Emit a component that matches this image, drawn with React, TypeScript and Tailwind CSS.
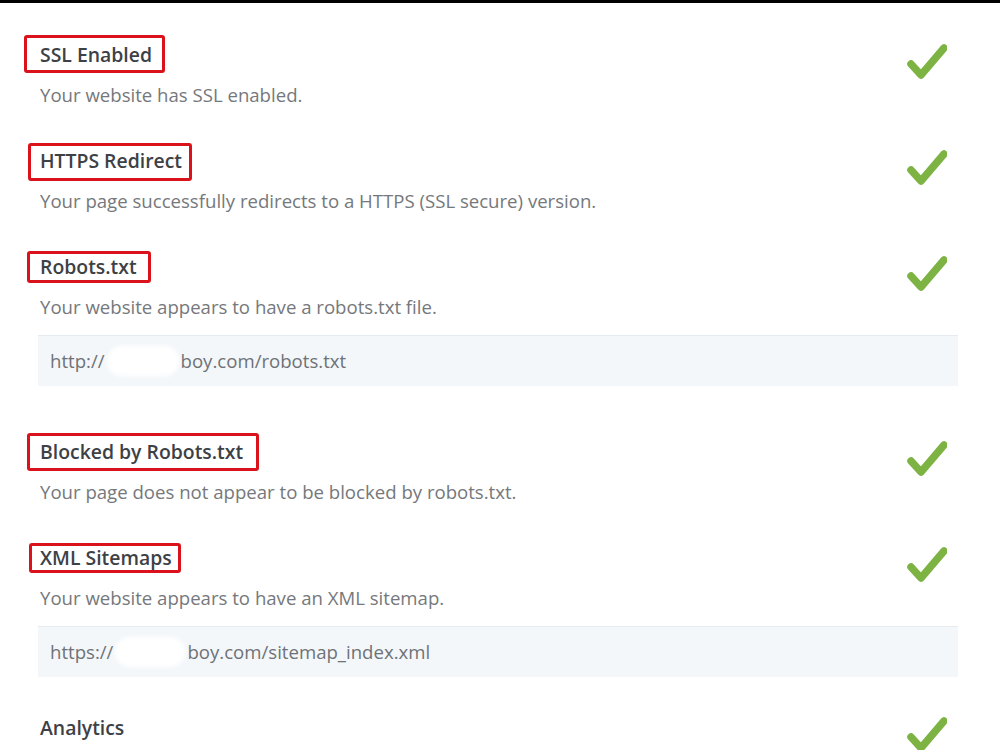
const sections = [
  {
    title: "SSL Enabled",
    desc: "Your website has SSL enabled.",
    box: "-left-[16px] -top-[6px] w-[141px] h-[38px]",
    gap: "mt-[38px]",
  },
  {
    title: "HTTPS Redirect",
    desc: "Your page successfully redirects to a HTTPS (SSL secure) version.",
    box: "-left-[12px] -top-[4px] w-[164px] h-[38px]",
    gap: "mt-[40px]",
  },
  {
    title: "Robots.txt",
    desc: "Your website appears to have a robots.txt file.",
    box: "-left-[13px] -top-[2px] w-[124px] h-[32px]",
    gap: "mt-[40px]",
    url: { pre: "http://", post: "boy.com/robots.txt", blob: "w-[72px]" },
  },
  {
    title: "Blocked by Robots.txt",
    desc: "Your page does not appear to be blocked by robots.txt.",
    box: "-left-[13px] -top-[5px] w-[232px] h-[38px]",
    gap: "mt-[52px]",
  },
  {
    title: "XML Sitemaps",
    desc: "Your website appears to have an XML sitemap.",
    box: "-left-[11px] -top-[1px] w-[152px] h-[30px]",
    gap: "mt-[40px]",
    url: { pre: "https://", post: "boy.com/sitemap_index.xml", blob: "w-[70px]" },
  },
  {
    title: "Analytics",
    desc: "",
    box: "",
    gap: "mt-[37px]",
  },
];

function Check() {
  return (
    <svg width="40" height="40" viewBox="0 0 40 40" className="mt-[1px] mr-[11px] shrink-0">
      <polyline
        points="4,22 14,33 37,6"
        fill="none"
        stroke="#7db343"
        strokeWidth={7.5}
        strokeLinecap="round"
        strokeLinejoin="round"
      />
    </svg>
  );
}

export default function App() {
  return (
    <div
      className="h-[750px] w-[1000px] overflow-hidden border-t-[3px] border-black bg-white pl-[38px] pr-[42px]"
      style={{ fontFamily: '"Open Sans", "Noto Sans", sans-serif' }}
    >
      {sections.map((s) => (
        <section key={s.title} className={s.gap}>
          <div className="flex items-start justify-between">
            <div className="pl-[2px]">
              <div className="relative inline-block h-[28px] text-[19.4px] leading-[28px] font-semibold text-[#3d4146]">
                {s.title}
                {s.box && (
                  <span className={`absolute rounded-[3px] border-[3px] border-[#d9121b] ${s.box}`} />
                )}
              </div>
              {s.desc && (
                <p className="mt-[14px] text-[18.6px] leading-[24px] text-[#75787c]">{s.desc}</p>
              )}
            </div>
            <Check />
          </div>
          {s.url && (
            <div className="mt-[16px] flex h-[51px] items-center border-t border-[#e6ebef] bg-[#f4f7fa] pl-[12px] text-[18.6px] text-[#6e7276]">
              <span>{s.url.pre}</span>
              <span className={`mx-[2px] inline-block h-[30px] rounded-full bg-white blur-[2px] ${s.url.blob}`} />
              <span>{s.url.post}</span>
            </div>
          )}
        </section>
      ))}
    </div>
  );
}
